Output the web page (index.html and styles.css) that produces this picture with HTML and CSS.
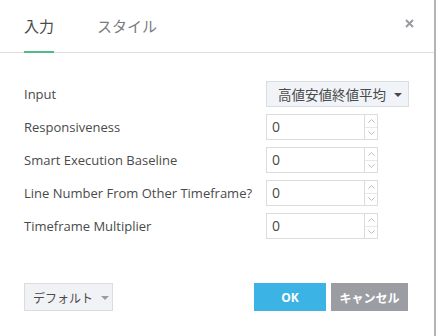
FILE: index.html
```html
<!DOCTYPE html>
<html lang="ja">
<head>
    <meta charset="UTF-8">
    <title>Properties</title>
    <link rel="stylesheet" href="styles.css">
</head>
<body>
    <div class="dialog">
        <div class="header">
            <div class="tab active">入力</div>
            <div class="tab">スタイル</div>
            <div class="close">
                <svg width="9" height="9" viewBox="0 0 9 9"><path d="M1 1L8 8M8 1L1 8" stroke="#9a9ba1" stroke-width="2"/></svg>
            </div>
        </div>

        <div class="form">
            <div class="row">
                <div class="label">Input</div>
                <div class="select">
                    <span class="text">高値安値終値平均</span>
                    <span class="caret"></span>
                </div>
            </div>
            <div class="row">
                <div class="label">Responsiveness</div>
                <div class="number"><span class="value">0</span><span class="spin"><i><svg width="7" height="4" viewBox="0 0 7 4"><path d="M0.5 3.5L3.5 0.5L6.5 3.5" fill="none" stroke="#b8bcc4"/></svg></i><i><svg width="7" height="4" viewBox="0 0 7 4"><path d="M0.5 0.5L3.5 3.5L6.5 0.5" fill="none" stroke="#b8bcc4"/></svg></i></span></div>
            </div>
            <div class="row">
                <div class="label">Smart Execution Baseline</div>
                <div class="number"><span class="value">0</span><span class="spin"><i><svg width="7" height="4" viewBox="0 0 7 4"><path d="M0.5 3.5L3.5 0.5L6.5 3.5" fill="none" stroke="#b8bcc4"/></svg></i><i><svg width="7" height="4" viewBox="0 0 7 4"><path d="M0.5 0.5L3.5 3.5L6.5 0.5" fill="none" stroke="#b8bcc4"/></svg></i></span></div>
            </div>
            <div class="row">
                <div class="label">Line Number From Other Timeframe?</div>
                <div class="number"><span class="value">0</span><span class="spin"><i><svg width="7" height="4" viewBox="0 0 7 4"><path d="M0.5 3.5L3.5 0.5L6.5 3.5" fill="none" stroke="#b8bcc4"/></svg></i><i><svg width="7" height="4" viewBox="0 0 7 4"><path d="M0.5 0.5L3.5 3.5L6.5 0.5" fill="none" stroke="#b8bcc4"/></svg></i></span></div>
            </div>
            <div class="row">
                <div class="label">Timeframe Multiplier</div>
                <div class="number"><span class="value">0</span><span class="spin"><i><svg width="7" height="4" viewBox="0 0 7 4"><path d="M0.5 3.5L3.5 0.5L6.5 3.5" fill="none" stroke="#b8bcc4"/></svg></i><i><svg width="7" height="4" viewBox="0 0 7 4"><path d="M0.5 0.5L3.5 3.5L6.5 0.5" fill="none" stroke="#b8bcc4"/></svg></i></span></div>
            </div>
        </div>

        <div class="footer">
            <div class="btn default">デフォルト<span class="caret light"></span></div>
            <div class="btn ok">OK</div>
            <div class="btn cancel">キャンセル</div>
        </div>
    </div>
</body>
</html>
```

FILE: styles.css
```css
body {
    margin: 0;
    background: #fff;
    font-family: "Open Sans", "Noto Sans CJK JP", sans-serif;
    color: #4a4a4a;
}
.dialog {
    width: 434px;
    height: 336px;
    border-right: 2px solid #b4b4b8;
    background: #fff;
}
.header {
    display: flex;
    height: 52px;
    border-bottom: 1px solid #dcdde0;
    padding-left: 24px;
    padding-right: 20px;
}
.tab {
    display: flex;
    align-items: center;
    height: 51px;
    margin-right: 43px;
    border-bottom: 2px solid transparent;
    font-family: "Noto Sans CJK JP", sans-serif;
    font-size: 15px;
    color: #7b7b80;
}
.tab.active {
    color: #4a4a4a;
    border-bottom-color: #53b987;
}
.close {
    margin-left: auto;
    margin-top: 19px;
}
.close svg {
    display: block;
}
.form {
    padding: 28px 0 0 24px;
}
.row {
    display: flex;
    align-items: center;
    height: 26px;
    margin-bottom: 7px;
}
.label {
    width: 242px;
    flex-shrink: 0;
    font-size: 13px;
    white-space: nowrap;
}
.select {
    display: flex;
    align-items: center;
    box-sizing: border-box;
    width: 143px;
    height: 26px;
    border: 1px solid #dadce0;
    background: #f0f3f7;
    padding-left: 11px;
    font-family: "Noto Sans CJK JP", sans-serif;
    font-size: 13.5px;
    color: #4a4a4a;
}
.select .text {
    flex: 1;
}
.caret {
    width: 0;
    height: 0;
    border-left: 4px solid transparent;
    border-right: 4px solid transparent;
    border-top: 4px solid #4a4a4a;
    margin-right: 6px;
    margin-top: 2px;
}
.caret.light {
    border-top-color: #9a9ba1;
    margin-left: 8px;
    margin-right: 0;
}
.number {
    display: flex;
    box-sizing: border-box;
    width: 112px;
    height: 26px;
    border: 1px solid #dadce0;
}
.value {
    flex: 1;
    padding-left: 5px;
    font-size: 14px;
    line-height: 24px;
}
.spin {
    display: flex;
    flex-direction: column;
    width: 12px;
    border-left: 1px solid #dadce0;
}
.spin i {
    flex: 1;
    display: flex;
    align-items: center;
    justify-content: center;
}
.spin i:first-child {
    border-bottom: 1px solid #e6e8eb;
}
.footer {
    display: flex;
    padding: 37px 26px 0 24px;
}
.btn {
    display: flex;
    align-items: center;
    justify-content: center;
    height: 28px;
    font-family: "Noto Sans CJK JP", sans-serif;
    font-size: 12px;
}
.default {
    box-sizing: border-box;
    width: 89px;
    justify-content: flex-start;
    padding-left: 8px;
    border: 1px solid #dadce0;
    background: #f1f2f6;
    color: #4a4a4a;
}
.ok {
    width: 72px;
    margin-left: auto;
    background: #3bb3e4;
    color: #fff;
    font-family: "Open Sans", sans-serif;
    font-weight: bold;
}
.cancel {
    width: 77px;
    margin-left: 5px;
    background: #9b9da3;
    color: #fff;
    font-weight: bold;
}
```
